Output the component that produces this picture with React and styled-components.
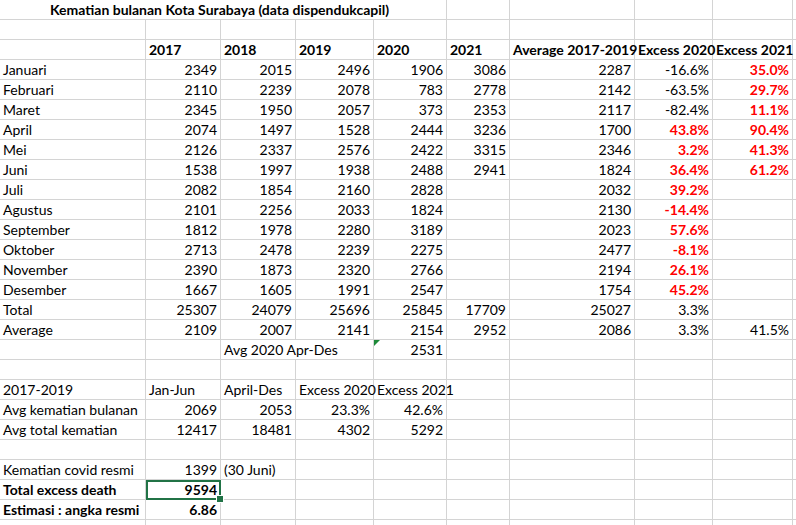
import React from "react";
import styled, { createGlobalStyle } from "styled-components";

const Global = createGlobalStyle`
  html, body { margin: 0; padding: 0; background: #fff; }
  body { font-family: Lato, "Open Sans", sans-serif; font-size: 14px; color: #000; }
`;

const COLS = [146, 75, 75, 78, 73, 63, 125, 78, 80, 4];

const Sheet = styled.div`
  display: grid;
  grid-template-columns: ${COLS.map((c) => c + "px").join(" ")};
  grid-auto-rows: 20px;
  width: 796px;
  overflow: hidden;
`;

const Cell = styled.div`
  position: relative;
  grid-column: span ${(p) => p.$span || 1};
  border-right: 1px solid ${(p) => (p.$noRight ? "transparent" : "#d4d4d4")};
  border-bottom: 1px solid #d4d4d4;
  padding: 0 3px;
  box-sizing: border-box;
  line-height: 20px;
  white-space: nowrap;
  overflow: visible;
  text-align: ${(p) => p.$align || "left"};
  font-weight: ${(p) => (p.$bold ? 700 : 400)};
  color: ${(p) => (p.$red ? "#ff0000" : "#000")};
  outline: ${(p) => (p.$sel ? "2px solid #217346" : "none")};
  outline-offset: -2px;
  z-index: ${(p) => (p.$sel ? 2 : 0)};
`;

const Handle = styled.span`
  position: absolute;
  right: -4px;
  bottom: -4px;
  width: 6px;
  height: 6px;
  background: #217346;
  border: 1px solid #fff;
`;

const Flag = styled.span`
  position: absolute;
  left: 0;
  top: 0;
  width: 0;
  height: 0;
  border-top: 6px solid #1e8a3a;
  border-right: 6px solid transparent;
`;

const n = (v, o = {}) => ({ v, a: "right", ...o });
const t = (v, o = {}) => ({ v, ...o });
const E = {};
const R = (v) => n(v, { b: 1, r: 1 });

const months = [
  ["Januari", 2349, 2015, 2496, 1906, 3086, 2287, n("-16.6%"), R("35.0%")],
  ["Februari", 2110, 2239, 2078, 783, 2778, 2142, n("-63.5%"), R("29.7%")],
  ["Maret", 2345, 1950, 2057, 373, 2353, 2117, n("-82.4%"), R("11.1%")],
  ["April", 2074, 1497, 1528, 2444, 3236, 1700, R("43.8%"), R("90.4%")],
  ["Mei", 2126, 2337, 2576, 2422, 3315, 2346, R("3.2%"), R("41.3%")],
  ["Juni", 1538, 1997, 1938, 2488, 2941, 1824, R("36.4%"), R("61.2%")],
  ["Juli", 2082, 1854, 2160, 2828, "", 2032, R("39.2%"), E],
  ["Agustus", 2101, 2256, 2033, 1824, "", 2130, R("-14.4%"), E],
  ["September", 1812, 1978, 2280, 3189, "", 2023, R("57.6%"), E],
  ["Oktober", 2713, 2478, 2239, 2275, "", 2477, R("-8.1%"), E],
  ["November", 2390, 1873, 2320, 2766, "", 2194, R("26.1%"), E],
  ["Desember", 1667, 1605, 1991, 2547, "", 1754, R("45.2%"), E],
].map((r) => [t(r[0]), ...r.slice(1, 7).map((x) => (x === "" ? E : n(String(x)))), r[7], r[8], E]);

const blank = Array(10).fill(E);

const rows = [
  [t("Kematian bulanan Kota Surabaya (data dispendukcapil)", { b: 1, span: 5, pad: 50 }), E, E, E, E, E],
  blank,
  [E, ...["2017", "2018", "2019", "2020", "2021", "Average 2017-2019", "Excess 2020", "Excess 2021"].map((x) => t(x, { b: 1 })), E],
  ...months,
  [t("Total"), n("25307"), n("24079"), n("25696"), n("25845"), n("17709"), n("25027"), n("3.3%"), E, E],
  [t("Average"), n("2109"), n("2007"), n("2141"), n("2154"), n("2952"), n("2086"), n("3.3%"), n("41.5%"), E],
  [E, E, t("Avg 2020 Apr-Des", { span: 2 }), n("2531", { flag: 1 }), E, E, E, E, E],
  blank,
  [t("2017-2019"), t("Jan-Jun"), t("April-Des"), t("Excess 2020"), t("Excess 2021"), E, E, E, E, E],
  [t("Avg kematian bulanan"), n("2069"), n("2053"), n("23.3%"), n("42.6%"), E, E, E, E, E],
  [t("Avg total kematian"), n("12417"), n("18481"), n("4302"), n("5292"), E, E, E, E, E],
  blank,
  [t("Kematian covid resmi"), n("1399"), t("(30 Juni)"), E, E, E, E, E, E, E],
  [t("Total excess death", { b: 1 }), n("9594", { b: 1, sel: 1 }), E, E, E, E, E, E, E, E],
  [t("Estimasi : angka resmi", { b: 1 }), n("6.86", { b: 1 }), E, E, E, E, E, E, E, E],
  blank,
];

export default function App() {
  return (
    <>
      <Global />
      <Sheet>
        {rows.map((row, ri) =>
          row.map((c, ci) => (
            <Cell
              key={ri + "-" + ci}
              $span={c.span}
              $align={c.a}
              $bold={c.b}
              $red={c.r}
              $sel={c.sel}
              $noRight={ri === 0 && ci === 0 && false}
              style={c.pad ? { paddingLeft: c.pad } : undefined}
            >
              {c.flag && <Flag />}
              {c.v}
              {c.sel && <Handle />}
            </Cell>
          ))
        )}
      </Sheet>
    </>
  );
}
